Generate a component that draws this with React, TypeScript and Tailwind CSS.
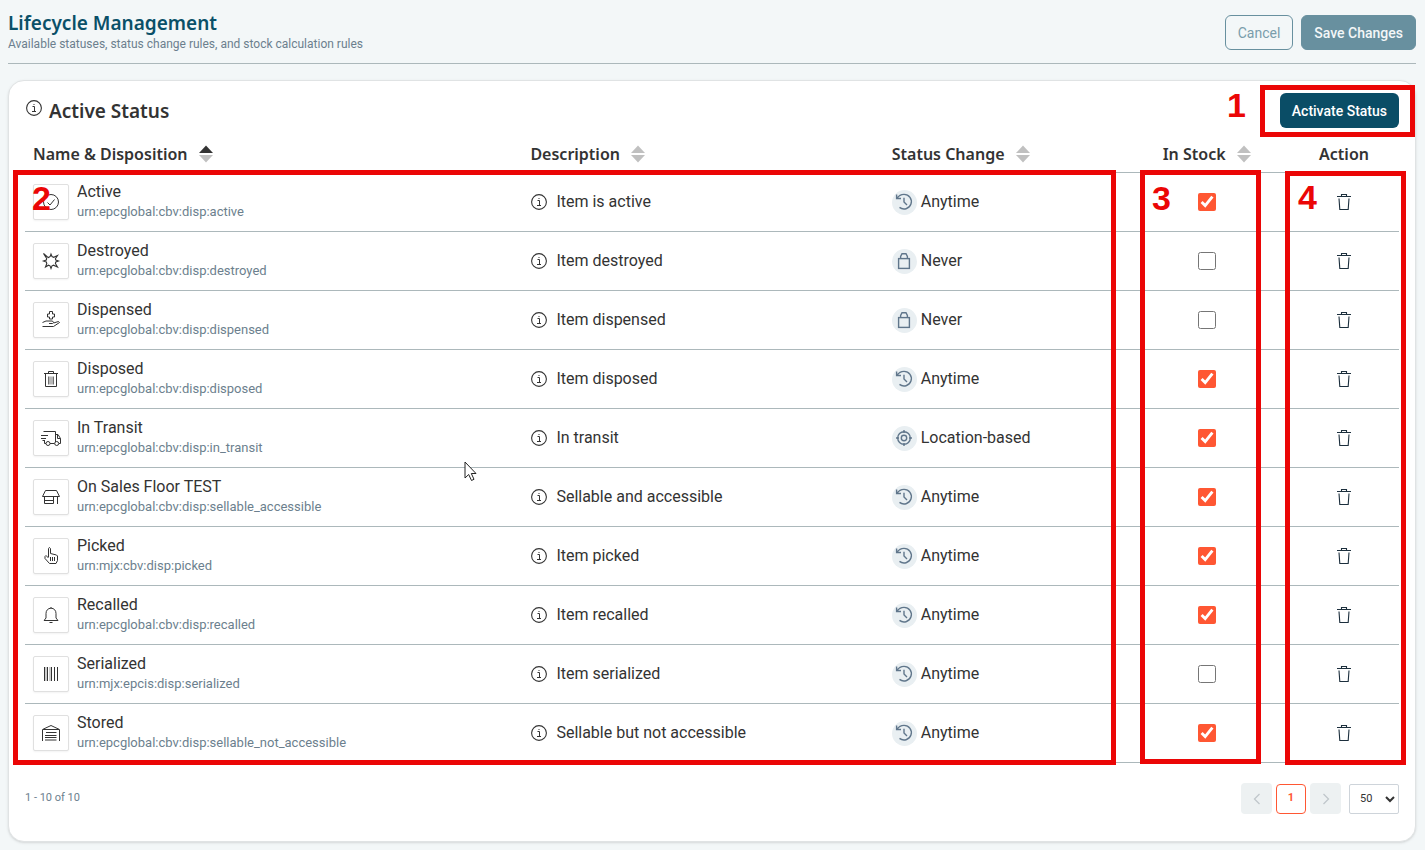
import React from "react";

type Mode = "Anytime" | "Never" | "Location-based";
type Status = { name: string; urn: string; description: string; mode: Mode; stock: boolean; icon: React.ReactNode };

const S = ({ children, size = 20, className = "" }: { children: React.ReactNode; size?: number; className?: string }) => (
  <svg width={size} height={size} viewBox={`0 0 ${size} ${size}`} fill="none" stroke="currentColor" strokeWidth="1" aria-hidden="true" className={className}>
    {children}
  </svg>
);

const InfoIcon = () => (
  <S size={18} className="shrink-0 text-[#333]">
    <circle cx="9" cy="9" r="7.4" strokeWidth="1.1" />
    <path d="M7.5 7.5H9.5V12M7 12.5H11" />
    <path d="M8.5 5.5H9.5" strokeWidth="1.2" />
  </S>
);

const icons = {
  active: <><circle cx="10" cy="10" r="7.5" /><path d="M6.5 10.5 9 13 13.5 7.5" /></>,
  destroyed: <><path d="M2.5 2.5 6.5 6 7.5 6.5 9.2 5.5 10 3 11 5.5 12.7 6.3 16.5 4.5 14.4 7.8 14.8 9 17.5 10 14.8 11 14.4 12.5 16.5 16 12.5 14.2 11 14.8 10 17.5 9 14.8 7.5 14.2 4.5 16 5.8 12.5 5.3 11 2.5 10 5.3 9 5.7 7.5Z" strokeWidth="1.1" /></>,
  dispensed: <><path d="M8.5 1.5H11.5V4H13.5V7H11.5V9H8.5V7H6.5V4H8.5Z" /><path d="M1.5 12.5 5 11H11.5L12.5 12.5 11.5 13.5H8M12.5 13 17.5 11.5 18.5 12.5 12.5 16.5H1.5" /></>,
  disposed: <><path d="M3 4.5H17M7.5 4V2.5H12.5V4M4.5 5V17.5H15.5V5" /><path d="M7.5 7.5V15.5M9 7.5V15.5M11 7.5V15.5M12.5 7.5V15.5" strokeWidth=".7" /></>,
  transit: <><path d="M2.5 3.5H14.5V14M14.5 6.5H17L19.5 10.5V15.5H18M16.5 7V10.5H19.5M0 7.5H7M0 10.5H5M1.5 12.5H4M3.5 12.5V15.5H5M9 15.5H13.5" /><circle cx="7" cy="15.5" r="2" /><circle cx="15.7" cy="15.5" r="2" /></>,
  store: <><path d="M4.5 3.5H15.5L18.5 9.5H1.5ZM3.5 10V16.5H12.5V10M4 13.5H12M16.5 10V17" /></>,
  picked: <><path d="M7.5 11V2.5L8.3 1.5 9.5 2.5V7.5L15.5 9 16.5 10V14.5L15 17.5H8.5L4 12.5V10.5L5 9.5 7.5 12M9.5 11V15M11.5 11V15M13.5 11V15" /></>,
  bell: <><path d="M3 15.5H17L15 13V8.5C15 5.4 13 3.2 10 3.2S5 5.4 5 8.5V13L3.2 15.3M10 3V2M8.5 17.5H11.5" /></>,
  barcode: <><path d="M3.5 3V17M6.5 3V17M10.5 3V17M13.5 3V17M16.5 3V17" /><path d="M5 3V17M9 3V17" strokeWidth=".5" /></>,
  garage: <><path d="M1.5 18V6.5L10 2.5 18.5 6.5V18M2 6.5H18M5 9.5H15.5M4 12.5H15.5M4 14.5H15.5M4 17H15.5" /></>,
};

const rows: Status[] = [
  { name: "Active", urn: "urn:epcglobal:cbv:disp:active", description: "Item is active", mode: "Anytime", stock: true, icon: icons.active },
  { name: "Destroyed", urn: "urn:epcglobal:cbv:disp:destroyed", description: "Item destroyed", mode: "Never", stock: false, icon: icons.destroyed },
  { name: "Dispensed", urn: "urn:epcglobal:cbv:disp:dispensed", description: "Item dispensed", mode: "Never", stock: false, icon: icons.dispensed },
  { name: "Disposed", urn: "urn:epcglobal:cbv:disp:disposed", description: "Item disposed", mode: "Anytime", stock: true, icon: icons.disposed },
  { name: "In Transit", urn: "urn:epcglobal:cbv:disp:in_transit", description: "In transit", mode: "Location-based", stock: true, icon: icons.transit },
  { name: "On Sales Floor TEST", urn: "urn:epcglobal:cbv:disp:sellable_accessible", description: "Sellable and accessible", mode: "Anytime", stock: true, icon: icons.store },
  { name: "Picked", urn: "urn:mjx:cbv:disp:picked", description: "Item picked", mode: "Anytime", stock: true, icon: icons.picked },
  { name: "Recalled", urn: "urn:epcglobal:cbv:disp:recalled", description: "Item recalled", mode: "Anytime", stock: true, icon: icons.bell },
  { name: "Serialized", urn: "urn:mjx:epcis:disp:serialized", description: "Item serialized", mode: "Anytime", stock: false, icon: icons.barcode },
  { name: "Stored", urn: "urn:epcglobal:cbv:disp:sellable_not_accessible", description: "Sellable but not accessible", mode: "Anytime", stock: true, icon: icons.garage },
];

const ModeIcon = ({ mode }: { mode: Mode }) => (
  <span className="flex size-[25px] shrink-0 items-center justify-center rounded-full bg-[#e9eff2] text-[#60768b]">
    <svg width="19" height="19" viewBox="0 0 19 19" fill="none" stroke="currentColor" strokeWidth="1.4" aria-hidden="true">
      {mode === "Anytime" && <path d="M1.6 1.5V5.5H6M2 5.3C3.6 2.8 6 1.4 9 1.4A7.3 7.3 0 1 1 4.5 14.4M9 4.8V9L12 12" />}
      {mode === "Never" && <><rect x="3.6" y="6.6" width="10.8" height="9.8" /><path d="M5.6 6.5V4.5L7 1.7H11L12.4 4.5V6.5" /></>}
      {mode === "Location-based" && <><circle cx="9" cy="9" r="6.3" /><circle cx="9" cy="9" r="2.7" /><path d="M9 1V4M9 14V17M1 9H4M14 9H17" /></>}
    </svg>
  </span>
);

const TrashIcon = () => (
  <S size={16} className="text-[#1c2f3d]">
    <path d="M1 2.5H15M5.5 2V.5H10.5V2M3 4.5 3.8 15.5H12.2L13 4.5" strokeWidth="1.1" />
  </S>
);

const Sort = ({ active = false }: { active?: boolean }) => (
  <svg width="14" height="18" viewBox="0 0 14 18" aria-hidden="true" className="shrink-0">
    <path d="M7 0.5 14 8H0Z" fill={active ? "#333" : "#c0c0c0"} />
    <path d="M0 10H14L7 17.5Z" fill="#c0c0c0" />
  </svg>
);

const Header = ({ label, active, center }: { label: string; active?: boolean; center?: boolean }) => (
  <th scope="col" className="px-2 pb-2 pt-0 font-semibold">
    <button type="button" className={center ? "mx-auto flex items-center gap-[11px]" : "flex items-center gap-[11px]"}>
      {label}
      <Sort active={active} />
    </button>
  </th>
);

const mark = "pointer-events-none absolute border-[5px] border-[#eb0606]";
const digit = "pointer-events-none absolute font-['Liberation_Sans',sans-serif] text-[34px] font-bold leading-9 text-[#eb0606]";

export default function App() {
  return (
    <div className="min-h-screen bg-[#f3f7f8] pb-2 pl-2 pr-[9px] font-[Roboto,sans-serif] text-[#333]">
      <header className="flex items-start justify-between border-b border-[#acb8bb] pb-[11px] pt-[11px]">
        <div>
          <h1 className="font-['Noto_Sans',sans-serif] text-[19px] font-semibold leading-[25px] text-[#0a5068]">Lifecycle Management</h1>
          <p className="text-xs leading-4 text-[#6c7f8e]">Available statuses, status change rules, and stock calculation rules</p>
        </div>
        <div className="flex gap-2 pt-1 text-sm">
          <button type="button" className="h-[35px] rounded-md border border-[#68909f] px-3 text-[#7a9dab]">Cancel</button>
          <button type="button" className="h-[35px] rounded-md border border-[#68909f] bg-[#68909f] px-3 font-medium text-[#f3f7f8]">Save Changes</button>
        </div>
      </header>

      <main className="relative mt-4 rounded-2xl border border-[#e0e3e4] bg-white px-4 pb-[27px] pt-3 shadow-sm">
        <div className="flex items-center justify-between">
          <div className="flex items-start">
            <span className="pt-0.5"><InfoIcon /></span>
            <h2 className="ml-[6px] font-['Noto_Sans',sans-serif] text-[19px] font-semibold leading-7">Active Status</h2>
          </div>
          <button type="button" className="h-[35px] rounded-md bg-[#0a4d66] px-3 text-sm font-medium text-white">Activate Status</button>
        </div>

        <table className="mt-4 w-full table-fixed border-collapse text-left">
          <colgroup>
            <col className="w-[36.2%]" />
            <col className="w-[26.3%]" />
            <col className="w-[17.5%]" />
            <col className="w-[12%]" />
            <col className="w-[8%]" />
          </colgroup>
          <thead className="border-b border-[#acb8bb] font-['Noto_Sans',sans-serif] text-base leading-5">
            <tr>
              <Header label="Name & Disposition" active />
              <Header label="Description" />
              <Header label="Status Change" />
              <Header label="In Stock" center />
              <th scope="col" className="px-2 pb-2 pt-0 text-center font-semibold">Action</th>
            </tr>
          </thead>
          <tbody>
            {rows.map((r) => (
              <tr key={r.name} className="h-[59px] border-b border-[#acb8bb]">
                <td className="px-2 py-0">
                  <div className="flex items-center gap-2">
                    <span className="flex size-9 shrink-0 items-center justify-center rounded-xs border border-[#e0e0e0] bg-white shadow-xs">
                      <S>{r.icon}</S>
                    </span>
                    <span>
                      <span className="block text-base leading-5">{r.name}</span>
                      <span className="block text-[13px] leading-5 text-[#6c7f8e]">{r.urn}</span>
                    </span>
                  </div>
                </td>
                <td className="px-2 py-0">
                  <div className="flex items-center gap-2"><InfoIcon />{r.description}</div>
                </td>
                <td className="px-2 py-0">
                  <div className="flex items-center gap-1"><ModeIcon mode={r.mode} />{r.mode}</div>
                </td>
                <td className="px-2 py-0">
                  <input type="checkbox" defaultChecked={r.stock} aria-label={`${r.name} in stock`} className="mx-auto block size-[18px] accent-[#ff5733]" />
                </td>
                <td className="px-2 py-0">
                  <button type="button" aria-label={`Delete ${r.name}`} className="mx-auto block"><TrashIcon /></button>
                </td>
              </tr>
            ))}
          </tbody>
        </table>

        <footer className="mt-5 flex items-center justify-between text-[11px]">
          <span className="text-[#6c7f8e]">1 - 10 of 10</span>
          <nav aria-label="Pagination" className="flex items-center gap-1">
            <button type="button" aria-label="Previous page" className="flex size-[31px] items-center justify-center rounded-sm bg-[#edf1f2] text-[#c0c7cb]">
              <S size={12}><path d="M8.5 1 3.5 6 8.5 11" strokeWidth="1.3" /></S>
            </button>
            <button type="button" aria-current="page" className="size-[30px] rounded-sm border border-[#ff5733] bg-white font-bold text-[#ff5733]">1</button>
            <button type="button" aria-label="Next page" className="flex size-[31px] items-center justify-center rounded-sm bg-[#edf1f2] text-[#c0c7cb]">
              <S size={12}><path d="M3.5 1 8.5 6 3.5 11" strokeWidth="1.3" /></S>
            </button>
            <select aria-label="Rows per page" defaultValue="50" className="ml-1 h-[30px] w-[50px] rounded-xs border border-[#ced4da] bg-white pl-[6px] font-[Roboto,sans-serif]">
              <option>50</option>
              <option>100</option>
            </select>
          </nav>
        </footer>

        <div className={`${mark} right-0 top-1 h-[52px] w-[155px]`} />
        <div className={`${mark} left-1 right-[299px] top-[89px] h-[595px]`} />
        <div className={`${mark} right-[154px] top-[89px] h-[594px] w-[121px]`} />
        <div className={`${mark} right-[9px] top-[90px] h-[594px] w-[121px]`} />
        <span className={`${digit} right-[169px] top-[6px]`}>1</span>
        <span className={`${digit} left-[23px] top-[99px]`}>2</span>
        <span className={`${digit} right-[244px] top-[99px]`}>3</span>
        <span className={`${digit} right-[98px] top-[98px]`}>4</span>
        <svg width="14" height="22" viewBox="0 0 14 22" aria-hidden="true" className="pointer-events-none absolute left-[455px] top-[380px]">
          <path d="M1 1V17L4.7 13.5 7.5 19.5 10 18.3 7.3 12.5H12Z" fill="white" stroke="#222" />
        </svg>
      </main>
    </div>
  );
}
